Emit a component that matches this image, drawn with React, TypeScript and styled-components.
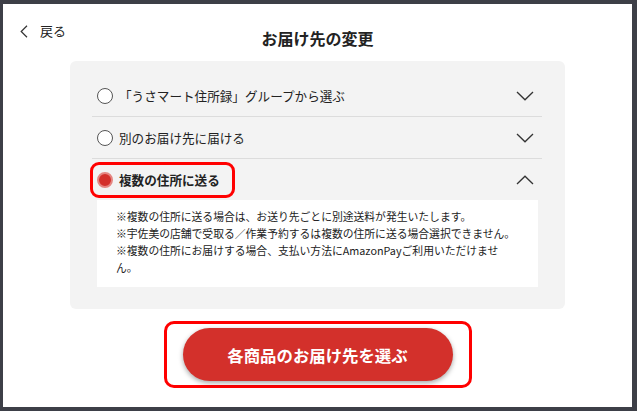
import { FC } from 'react';
import styled, { createGlobalStyle } from 'styled-components';

const GlobalStyle = createGlobalStyle`
    html, body {
        margin: 0;
        padding: 0;
        background: #3d3f47;
    }
    body {
        width: 637px;
        height: 411px;
        overflow: hidden;
        font-family: 'Noto Sans CJK JP', 'Noto Sans', sans-serif;
        color: #222;
    }
`;

type Option = {
    label: string;
    selected?: boolean;
};

const options: Option[] = [
    { label: '「うさマート住所録」グループから選ぶ' },
    { label: '別のお届け先に届ける' },
    { label: '複数の住所に送る', selected: true },
];

const Chevron: FC<{ up?: boolean }> = ({ up }) => (
    <svg width='18' height='10' viewBox='0 0 18 10' fill='none'>
        <path
            d={up ? 'M1 9 L9 1.2 L17 9' : 'M1 1 L9 8.8 L17 1'}
            stroke='#333'
            strokeWidth='1.3'
        />
    </svg>
);

export default function App() {
    return (
        <>
            <GlobalStyle />
            <Modal>
                <Header>
                    <Back>
                        <svg width='8' height='13' viewBox='0 0 8 13' fill='none'>
                            <path d='M7 0.8 L1.2 6.5 L7 12.2' stroke='#333' strokeWidth='1.2' />
                        </svg>
                        戻る
                    </Back>
                    <Title>お届け先の変更</Title>
                </Header>
                <Panel>
                    {options.map((option) => (
                        <Row key={option.label} isOpen={!!option.selected}>
                            <RowHead>
                                <Label highlighted={!!option.selected}>
                                    <Radio checked={!!option.selected} />
                                    <LabelText strong={!!option.selected}>{option.label}</LabelText>
                                </Label>
                                <Toggle>
                                    <Chevron up={option.selected} />
                                </Toggle>
                            </RowHead>
                            {option.selected && (
                                <Notes>
                                    <p>※複数の住所に送る場合は、お送り先ごとに別途送料が発生いたします。</p>
                                    <p>※宇佐美の店舗で受取る／作業予約するは複数の住所に送る場合選択できません。</p>
                                    <p>
                                        ※複数の住所にお届けする場合、支払い方法にAmazonPayご利用いただけませ
                                        <br />
                                        ん。
                                    </p>
                                </Notes>
                            )}
                        </Row>
                    ))}
                </Panel>
                <Footer>
                    <Highlight>
                        <Submit>各商品のお届け先を選ぶ</Submit>
                    </Highlight>
                </Footer>
            </Modal>
        </>
    );
}

const Modal = styled.div`
    box-sizing: border-box;
    margin: 4px 0 0 3px;
    width: 629px;
    height: 403px;
    background: #fff;
    padding-top: 17px;
`;

const Header = styled.div`
    display: grid;
    grid-template-columns: 1fr auto 1fr;
    align-items: start;
    margin-bottom: 11px;
`;

const Back = styled.div`
    display: flex;
    align-items: center;
    gap: 12px;
    padding-left: 17px;
    font-size: 13px;
    line-height: 20px;
    color: #222;
`;

const Title = styled.h1`
    grid-column: 2;
    margin: 5px 0 0;
    font-size: 16px;
    line-height: 24px;
    font-weight: 700;
    color: #222;
`;

const Panel = styled.div`
    box-sizing: border-box;
    width: 495px;
    margin: 0 auto;
    padding: 14px 23px 22px 22px;
    background: #f3f3f3;
    border-radius: 6px;
`;

const Row = styled.div<{ isOpen: boolean }>`
    border-bottom: ${({ isOpen }) => (isOpen ? 'none' : '1px solid #dcdcdc')};
`;

const RowHead = styled.div`
    display: flex;
    align-items: center;
    justify-content: space-between;
    height: 41px;
`;

const Label = styled.div<{ highlighted: boolean }>`
    display: flex;
    align-items: center;
    gap: 6px;
    height: 30px;
    margin-left: -2px;
    padding: 0 12px 0 4px;
    border: 3px solid ${({ highlighted }) => (highlighted ? '#ff0000' : 'transparent')};
    border-radius: 9px;
`;

const Radio = styled.span<{ checked: boolean }>`
    box-sizing: border-box;
    width: 16px;
    height: 16px;
    border-radius: 50%;
    flex-shrink: 0;
    border: ${({ checked }) => (checked ? '2px solid #e58682' : '1.5px solid #555')};
    background: ${({ checked }) => (checked ? '#d3302b' : '#fff')};
`;

const LabelText = styled.span<{ strong: boolean }>`
    font-size: 12.6px;
    line-height: 18px;
    font-weight: ${({ strong }) => (strong ? 700 : 400)};
    color: #222;
    white-space: nowrap;
`;

const Toggle = styled.span`
    display: flex;
    margin-right: 8px;
`;

const Notes = styled.div`
    margin: 0 4px 0 5px;
    padding: 8px 19px 11px;
    background: #fff;

    p {
        margin: 0;
        font-size: 10.8px;
        line-height: 17px;
        color: #222;
        white-space: nowrap;
    }
`;

const Footer = styled.div`
    display: flex;
    justify-content: center;
    margin-top: 12px;
`;

const Highlight = styled.div`
    padding: 4px 16px;
    border: 3px solid #ff0000;
    border-radius: 10px;
`;

const Submit = styled.button`
    width: 270px;
    height: 53px;
    border: none;
    border-radius: 27px;
    background: #d3302b;
    box-shadow: 0 2px 5px rgba(0, 0, 0, 0.35);
    color: #fff;
    font-family: inherit;
    font-size: 16.4px;
    font-weight: 700;
    cursor: pointer;
`;
